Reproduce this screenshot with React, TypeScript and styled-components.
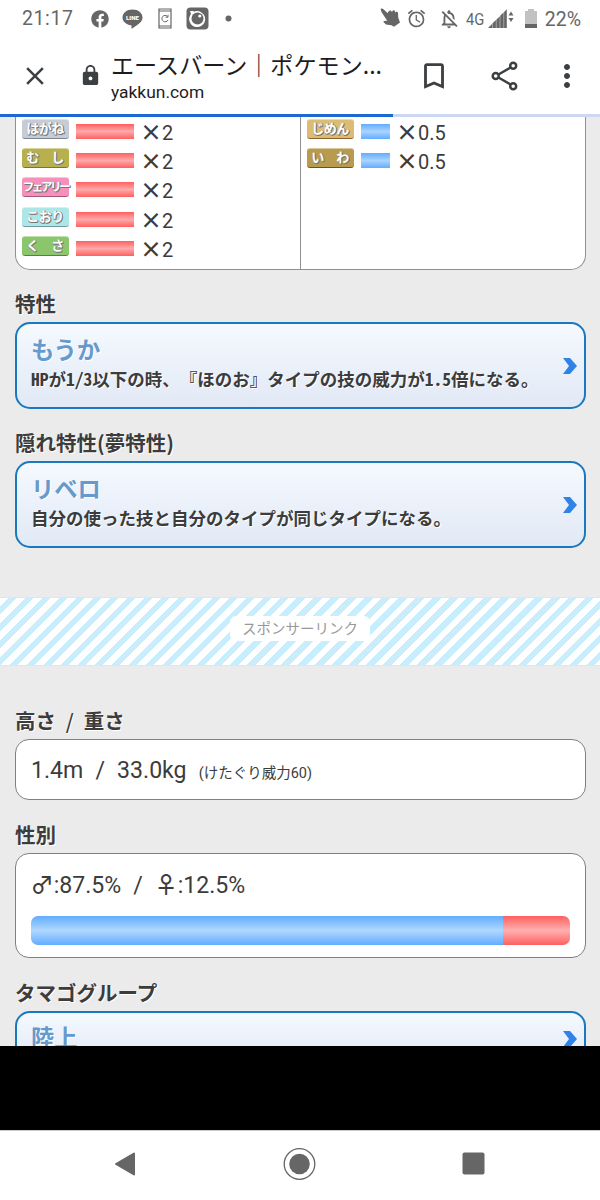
import React from "react";
import styled, { createGlobalStyle } from "styled-components";
import { FaFacebook } from "react-icons/fa";
import {
  MdAlarm,
  MdBookmarkBorder,
  MdClose,
  MdLock,
  MdMoreVert,
  MdOutlineNotificationsOff,
} from "react-icons/md";

const jp = `"Noto Sans CJK JP", sans-serif`;
const latin = `Roboto, "Noto Sans CJK JP", sans-serif`;

const GlobalStyle = createGlobalStyle`
  * { box-sizing: border-box; }
  body { margin: 0; background: #fff; }
`;

const Screen = styled.div`
  display: flex;
  flex-direction: column;
  width: 600px;
  height: 1200px;
  overflow: hidden;
  font-family: ${latin};
  color: #3c3c3c;
`;

const StatusBar = styled.div`
  display: flex;
  flex: none;
  align-items: center;
  justify-content: space-between;
  height: 37px;
  padding: 0 19px 0 22px;
  color: #666;
  font-size: 19.5px;
  svg { display: block; flex: none; }
`;

const StatusGroup = styled.div`
  display: flex;
  align-items: center;
`;

const Gap = styled.span<{ $w: number }>`
  flex: none;
  width: ${(p) => p.$w}px;
`;

const Clock = styled.span`
  width: 51px;
  letter-spacing: 0.6px;
  line-height: 24px;
  padding-top: 1px;
  white-space: nowrap;
`;

const Network = styled.span`
  width: 20px;
  font-size: 17px;
  white-space: nowrap;
  transform: scaleX(0.87);
  transform-origin: left;
`;

const Percent = styled.span`
  width: 39px;
  padding-top: 1px;
  text-align: right;
  white-space: nowrap;
`;

const Toolbar = styled.header`
  display: flex;
  flex: none;
  align-items: center;
  height: 77px;
  padding: 0 15px 0 20px;
  color: #3c4043;
  svg { display: block; flex: none; }
`;

const Address = styled.div`
  display: flex;
  flex-direction: column;
  width: 280px;
  margin-left: 9px;
  color: #1d1d1f;
`;

const PageTitle = styled.div`
  height: 34px;
  margin-top: -2px;
  font: 23.1px/34px ${jp};
  white-space: nowrap;
`;

const Host = styled.div`
  height: 22px;
  padding-top: 1px;
  font: 17.4px/20px ${latin};
`;

const Actions = styled.div`
  display: flex;
  flex: 1;
  align-items: center;
`;

const Progress = styled.div`
  flex: none;
  height: 3px;
  background: linear-gradient(to right, #1b68d6 393px, #cdd8f4 393px);
`;

const Page = styled.main`
  flex: none;
  height: 929px;
  overflow: hidden;
  background: #ebebeb;
`;

const Matchups = styled.section`
  display: grid;
  grid-template-columns: 284px 1fr;
  width: 571px;
  height: 153px;
  margin-left: 15px;
  overflow: hidden;
  border: 1.5px solid #909090;
  border-top: 0;
  border-radius: 0 0 15px 15px;
  background: #fff;
`;

const MatchColumn = styled.div<{ $divided?: boolean }>`
  padding: 2px 0 0 6px;
  border-left: ${(p) => (p.$divided ? "1.5px solid #909090" : "0")};
`;

const MatchRow = styled.div`
  display: flex;
  align-items: flex-start;
  height: 29.2px;
`;

const TypeBadge = styled.span<{ $color: string; $edge: string; $squeeze?: boolean }>`
  display: flex;
  align-items: center;
  justify-content: center;
  width: 47px;
  height: 20px;
  padding: 0 ${(p) => (p.$squeeze ? 0 : 1)}px 2px 0;
  border-top: 1px solid rgba(255, 255, 255, 0.45);
  border-bottom: 1.5px solid ${(p) => p.$edge};
  border-radius: 3px;
  background: ${(p) => p.$color};
  color: #fff;
  font: 700 ${(p) => (p.$squeeze ? 11.5 : 13)}px/16px ${jp};
  letter-spacing: ${(p) => (p.$squeeze ? "-2.4px" : "-0.5px")};
  white-space: pre;
  text-shadow: 1px 1px 0 #777, 1px 0 0 #888, 0 1px 0 #888;
`;

const MatchBar = styled.span<{ $weak?: boolean }>`
  width: ${(p) => (p.$weak ? 58 : 29)}px;
  height: 15px;
  margin: 5px 0 0 7px;
  background: ${(p) =>
    p.$weak
      ? "linear-gradient(#ff6060, #ffaaaa 50%, #ff6060)"
      : "linear-gradient(#62acff, #aad4ff 50%, #62acff)"};
`;

const Times = styled.span`
  width: 22px;
  margin: -2px 0 0 6px;
  font: 700 22px/26px ${jp};
  text-align: center;
`;

const Factor = styled.span`
  font: 20px/28px ${latin};
`;

const Heading = styled.h2<{ $top: number }>`
  height: 30px;
  margin: ${(p) => p.$top}px 0 4px 15px;
  font: 700 20.5px/30px ${jp};
  color: #3c3c3c;
  text-shadow: 1px 1px 0 #fff;
  word-spacing: 5.2px;
  white-space: pre;
`;

const Thin = styled.span`
  font-weight: 500;
`;

const Card = styled.section<{ $height: number; $pad: number }>`
  width: 571px;
  height: ${(p) => p.$height}px;
  margin-left: 15px;
  padding: ${(p) => p.$pad}px 15px 0;
  border: 1.5px solid #808080;
  border-radius: 14px;
  background: #fff;
`;

const LinkCard = styled.a<{ $height: number }>`
  display: flex;
  align-items: center;
  justify-content: space-between;
  width: 571px;
  height: ${(p) => p.$height}px;
  margin-left: 15px;
  padding: 0 6px 0 14px;
  border: 2px solid #1a78bf;
  border-radius: 15px;
  background: linear-gradient(#f5f9ff, #e1e9f5);
`;

const LinkTitle = styled.div`
  height: 32px;
  margin-top: -5px;
  font: 700 23.3px/32px ${jp};
  color: #6699cc;
  text-shadow: 1px 1px 0 #fff;
`;

const LinkText = styled.div`
  height: 28px;
  font: 700 17.5px/28px ${jp};
  font-feature-settings: "hwid";
  text-shadow: 1px 1px 0 #fff;
  white-space: nowrap;
`;

const AdBand = styled.div`
  display: flex;
  align-items: center;
  justify-content: center;
  height: 69px;
  margin-top: 49px;
  padding-bottom: 6px;
  border: 1px solid #c8eefe;
  border-width: 1px 0;
  background: repeating-linear-gradient(135deg, #fff 0 6px, #c8eefe 6px 12px);
`;

const AdLabel = styled.span`
  width: 140px;
  height: 25px;
  border-radius: 6px;
  background: #fff;
  color: #999;
  font: 14.5px/23px ${jp};
  text-align: center;
`;

const Stat = styled.div`
  height: 28px;
  font: 23.1px/28px ${latin};
  word-spacing: 6.4px;
  white-space: nowrap;
`;

const Note = styled.small`
  font: 14.5px/20px ${latin};
`;

const Sex = styled.span`
  margin-left: -0.5px;
  font: 500 23.2px/28px ${jp};
`;

const GenderBar = styled.div`
  width: 539px;
  height: 29px;
  margin-top: 19px;
  border-radius: 7px;
  overflow: hidden;
  display: flex;
`;

const GenderShare = styled.span<{ $male?: boolean }>`
  flex: ${(p) => (p.$male ? 87.5 : 12.5)};
  background: ${(p) =>
    p.$male
      ? "linear-gradient(#62acff, #b0d8ff 50%, #62acff)"
      : "linear-gradient(#ff6060, #ffb0b0 50%, #ff6060)"};
`;

const Blank = styled.div`
  flex: none;
  height: 84px;
  background: #000;
`;

const NavBar = styled.nav`
  display: flex;
  flex: 1;
  align-items: center;
  justify-content: space-between;
  padding: 0 115px 4px 114px;
  border-top: 1px solid #ccc;
`;

const Chevron = () => (
  <svg width="16" height="18" viewBox="0 0 16 18">
    <path d="M1 1h7l7 8-7 8H1l6-8z" fill="#2f82e8" />
  </svg>
);

type Match = { name: string; color: string; edge: string; squeeze?: boolean };

const weak: Match[] = [
  { name: "はがね", color: "#c5ccd6", edge: "#7c8690" },
  { name: "む　し", color: "#b8b04c", edge: "#7b7432" },
  { name: "フェアリー", color: "#f78fbc", edge: "#a4567b", squeeze: true },
  { name: "こおり", color: "#ade6e6", edge: "#6f9c9c" },
  { name: "く　さ", color: "#8cc66c", edge: "#587e48" },
];
const resist: Match[] = [
  { name: "じめん", color: "#dcbb75", edge: "#8d602c" },
  { name: "い　わ", color: "#b99b4d", edge: "#794b20" },
];

const MatchLine = ({ m, isWeak }: { m: Match; isWeak?: boolean }) => (
  <MatchRow>
    <TypeBadge $color={m.color} $edge={m.edge} $squeeze={m.squeeze}>{m.name}</TypeBadge>
    <MatchBar $weak={isWeak} />
    <Times>×</Times>
    <Factor>{isWeak ? "2" : "0.5"}</Factor>
  </MatchRow>
);

const AbilityCard = ({ title, text }: { title: string; text?: string }) => (
  <LinkCard $height={text ? 87 : 56}>
    <div>
      <LinkTitle>{title}</LinkTitle>
      {text && <LinkText>{text}</LinkText>}
    </div>
    <Chevron />
  </LinkCard>
);

export default function App() {
  return (
    <Screen>
      <GlobalStyle />
      <StatusBar>
        <StatusGroup>
          <Clock>21:17</Clock>
          <Gap $w={18} />
          <FaFacebook size={18} />
          <Gap $w={13} />
          <svg width="21" height="20" viewBox="0 0 21 20">
            <path d="M10.5 .5C4.8 .5 .5 4 .5 8.5c0 4 3.500 7 8.300 7.800 1 .2 .8 1 .6 2.700 0 .6 .3 .7 .8 .4C15 16.500 20.500 13 20.500 8.500 20.500 4 16.200.5 10.500.5z" fill="#666" />
            <text x="10.500" y="10.800" fontSize="6.200" fontWeight="900" textAnchor="middle" fill="#fff" fontFamily="Roboto">LINE</text>
          </svg>
          <Gap $w={15} />
          <svg width="14" height="21" viewBox="0 0 14 21" fill="none" stroke="#666">
            <path d="M1 1h12v19H1zM1 3h12M1 18h12" strokeWidth="1.200" />
            <path d="M9.500 8.500A3.200 3.200 0 1 0 10 12M10 6.800v2.400H7.600" strokeWidth="1" />
          </svg>
          <Gap $w={14} />
          <svg width="23" height="23" viewBox="0 0 23 23">
            <rect x=".5" y=".5" width="22" height="22" rx="4" fill="#666" />
            <path d="M4 4h4l-.5 1A8 8 0 1 1 5 7z" fill="#fff" />
            <circle cx="11.500" cy="11.500" r="6" fill="#666" />
            <circle cx="13.800" cy="9" r="1.600" fill="#fff" />
          </svg>
          <Gap $w={16} />
          <svg width="7" height="7" viewBox="0 0 7 7">
            <circle cx="3.500" cy="3.500" r="3" fill="#666" />
          </svg>
        </StatusGroup>
        <StatusGroup>
          <svg width="20" height="21" viewBox="0 0 20 21">
            <path
              d="M.6 1C1.500 .2 2.600.4 3.400 1.200L7.500 5l1.700-2.300 1.700-.2 1 1.500 1.200-1.700 1.500.2.8 2 1.300-.9 1.300.8.2 5.100 1.800 4.900-6 4.300-2.500-1.500-5.500-.8-2.500-2.300.2-1 3.500-.3L1.500 4z"
              fill="#666"
            />
          </svg>
          <Gap $w={6} />
          <MdAlarm size={21} />
          <Gap $w={11} />
          <MdOutlineNotificationsOff size={22} />
          <Gap $w={6} />
          <Network>4G</Network>
          <Gap $w={2} />
          <svg width="27" height="20" viewBox="0 0 27 20" fill="#666">
            <path d="M0 19l4-4v4zM4.400 14.600l3.500-3.500V19H4.400zM8.300 10.700l3.500-3.500V19H8.300zM12.200 6.800l3.500-3.500V19h-3.500zM16.100 2.900L18.800.2V19h-2.700zM20.500 6.500l2.500-4 2.500 4zM20.500 9h5L23 13z" />
          </svg>
          <Gap $w={10} />
          <svg width="12" height="20" viewBox="0 0 12 20">
            <path d="M3 0h6v2h3v14H0V2h3z" fill="#c2c2c2" />
            <path d="M0 15h12v4H0z" fill="#666" />
          </svg>
          <Gap $w={5} />
          <Percent>22%</Percent>
        </StatusGroup>
      </StatusBar>
      <Toolbar>
        <MdClose size={30} />
        <Gap $w={29} />
        <MdLock size={23} />
        <Address>
          <PageTitle>エースバーン｜ポケモン...</PageTitle>
          <Host>yakkun.com</Host>
        </Address>
        <Actions>
          <Gap $w={26} />
          <MdBookmarkBorder size={34} />
          <Gap $w={40} />
          <svg width="28" height="30" viewBox="0 0 28 30" fill="none" stroke="#3c4043" strokeWidth="2.500">
            <path d="M7.500 13.500l12-7M7.500 16.500l12 7" />
            <circle cx="4.700" cy="15" r="3" />
            <circle cx="22.200" cy="4.800" r="3" />
            <circle cx="22.200" cy="25.200" r="3" />
          </svg>
          <Gap $w={30} />
          <MdMoreVert size={36} />
        </Actions>
      </Toolbar>
      <Progress />
      <Page>
        <Matchups>
          <MatchColumn>
            {weak.map((m) => <MatchLine key={m.name} m={m} isWeak />)}
          </MatchColumn>
          <MatchColumn $divided>
            {resist.map((m) => <MatchLine key={m.name} m={m} />)}
          </MatchColumn>
        </Matchups>
        <Heading $top={18}>特性</Heading>
        <AbilityCard title="もうか" text="HPが1/3以下の時、『ほのお』タイプの技の威力が1.5倍になる。" />
        <Heading $top={18}>隠れ特性(夢特性)</Heading>
        <AbilityCard title="リベロ" text="自分の使った技と自分のタイプが同じタイプになる。" />
        <AdBand>
          <AdLabel>スポンサーリンク</AdLabel>
        </AdBand>
        <Heading $top={39}>高さ <Thin>/</Thin> 重さ</Heading>
        <Card $height={61} $pad={17}>
          <Stat>1.4m / 33.0kg <Note>(けたぐり威力60)</Note></Stat>
        </Card>
        <Heading $top={19}>性別</Heading>
        <Card $height={105} $pad={15}>
          <Stat><Sex>♂</Sex>:87.5% / <Sex>♀</Sex>:12.5%</Stat>
          <GenderBar>
            <GenderShare $male />
            <GenderShare />
          </GenderBar>
        </Card>
        <Heading $top={19}>タマゴグループ</Heading>
        <AbilityCard title="陸上" />
      </Page>
      <Blank />
      <NavBar>
        <svg width="22" height="26" viewBox="0 0 22 26">
          <path d="M2 13L20 2.500v21z" fill="#666" stroke="#666" strokeWidth="2" strokeLinejoin="round" />
        </svg>
        <svg width="34" height="34" viewBox="0 0 34 34">
          <circle cx="17.500" cy="17" r="15.300" fill="none" stroke="#666" strokeWidth="1.300" />
          <circle cx="17.500" cy="17" r="10.300" fill="#666" />
        </svg>
        <svg width="23" height="23" viewBox="0 0 23 23">
          <rect width="22" height="22" x=".5" y=".5" rx="2" fill="#666" />
        </svg>
      </NavBar>
    </Screen>
  );
}
